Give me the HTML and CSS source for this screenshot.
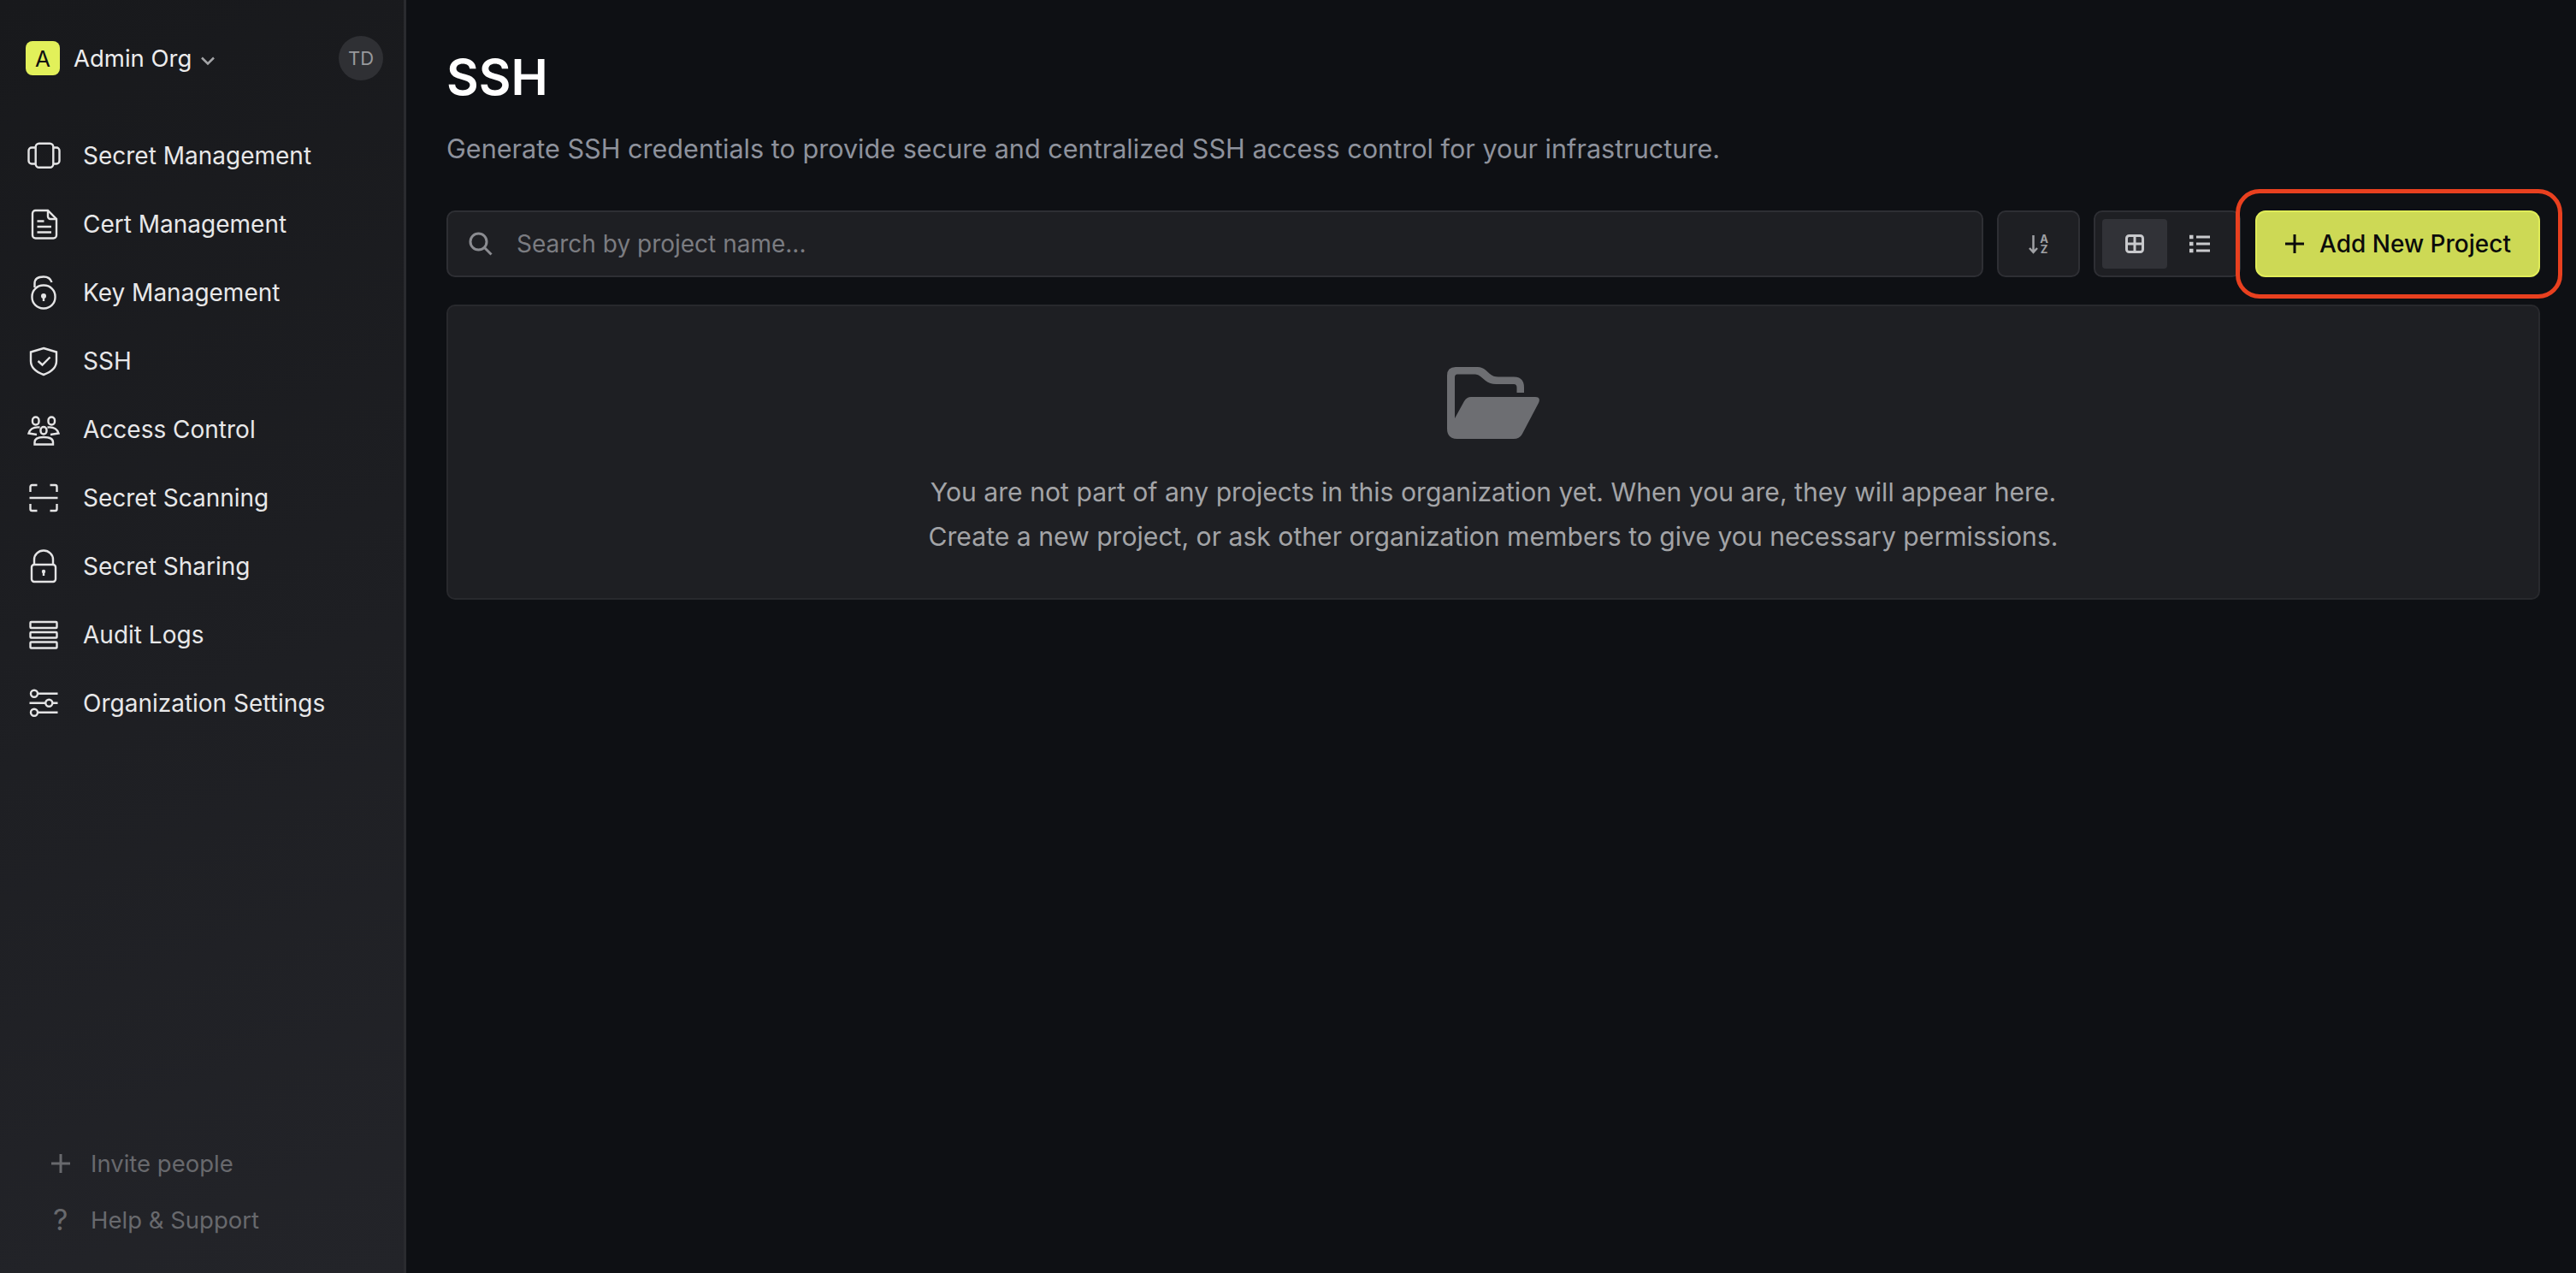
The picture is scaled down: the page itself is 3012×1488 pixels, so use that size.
FILE: index.html
```html
<!DOCTYPE html>
<html lang="en">
<head>
    <meta charset="UTF-8">
    <meta name="viewport" content="width=device-width, initial-scale=1.0">
    <title>SSH</title>
    <link rel="stylesheet" href="styles.css">
</head>
<body>
    <aside class="sidebar">
        <div class="org-row">
            <span class="org-logo">A</span>
            <span class="org-name">Admin Org</span>
            <svg class="org-chevron" viewBox="0 0 18 12"><path d="M2 2.500l7 7 7-7"/></svg>
            <span class="avatar">TD</span>
        </div>
        <nav class="nav">
            <a class="nav-item">
                <svg class="nav-icon" viewBox="0 0 40 40"><rect x="10.7" y="5.7" width="20.6" height="28" rx="4"/><path d="M10.7 10.5H6a3.500 3.500 0 0 0-3.500 3.500v12a3.500 3.500 0 0 0 3.500 3.500h4.700M31.300 10.500H35a3.500 3.500 0 0 1 3.500 3.500v12a3.500 3.500 0 0 1-3.500 3.500h-3.700"/></svg>
                Secret Management
            </a>
            <a class="nav-item">
                <svg class="nav-icon" viewBox="0 0 40 40"><path d="M10.500 4H25L35 14v19a3.500 3.500 0 0 1-3.500 3.500h-21A3.500 3.500 0 0 1 7 33V7.500A3.500 3.500 0 0 1 10.500 4z"/><path d="M25 4v7a3 3 0 0 0 3 3h7M12.500 16.500h8M12.500 23h16.500M12.500 29.500h16.500"/></svg>
                Cert Management
            </a>
            <a class="nav-item">
                <svg class="nav-icon" viewBox="0 0 40 40"><rect x="6.500" y="11.500" width="27" height="27" rx="13"/><path d="M9.500 14V9.500Q9.500 1.500 20 1.500Q27.500 1.500 29.500 8"/><circle class="solid" cx="20" cy="24" r="3"/><path d="M20 25v5"/></svg>
                Key Management
            </a>
            <a class="nav-item nav-item-active">
                <svg class="nav-icon" viewBox="0 0 40 40"><path d="M20 5l15 4.500V20q0 10.500-15 16Q5 30.500 5 20V9.500z"/><path d="M13.500 20l5 4.500 9-9"/></svg>
                SSH
            </a>
            <a class="nav-item">
                <svg class="nav-icon" viewBox="0 0 40 40"><rect x="7" y="5.500" width="7.500" height="9" rx="3.700"/><rect x="25.500" y="5.500" width="7.500" height="9" rx="3.700"/><rect x="16.500" y="17" width="7" height="8.500" rx="3.500"/><path d="M15.500 17.500Q5 16.500 2.500 24.500L12 26M24.500 17.500Q35 16.500 37.500 24.500L28 26"/><path d="M9.500 37.500V35Q9.500 29 20 29Q31 29 31 35v2.500z"/></svg>
                Access Control
            </a>
            <a class="nav-item">
                <svg class="nav-icon" viewBox="0 0 40 40"><path d="M4.500 13V7a2 2 0 0 1 2-2h6M27.500 5h6a2 2 0 0 1 2 2v6M4.500 27v6a2 2 0 0 0 2 2h6M27.500 35h6a2 2 0 0 0 2-2v-6M3.500 20h33"/></svg>
                Secret Scanning
            </a>
            <a class="nav-item">
                <svg class="nav-icon" viewBox="0 0 40 40"><rect x="6" y="18" width="28" height="20" rx="3"/><path d="M9 18v-6a11 10.500 0 0 1 22 0v6"/><circle class="solid" cx="20" cy="26" r="2.200"/><path d="M20 27v4"/></svg>
                Secret Sharing
            </a>
            <a class="nav-item">
                <svg class="nav-icon" viewBox="0 0 40 40"><rect x="4.500" y="5" width="31" height="7" rx="1"/><rect x="4.500" y="17" width="31" height="6.500" rx="1"/><rect x="4.500" y="28.500" width="31" height="7" rx="1"/></svg>
                Audit Logs
            </a>
            <a class="nav-item">
                <svg class="nav-icon" viewBox="0 0 40 40"><circle cx="9" cy="8.700" r="4"/><circle cx="26.300" cy="19.700" r="4"/><circle cx="9" cy="30.700" r="4"/><path d="M13 8.700h23.500M3.500 19.700h19M30.300 19.700h6.200M13 30.700h23.500"/></svg>
                Organization Settings
            </a>
        </nav>
        <div class="side-footer">
            <a class="footer-item">
                <svg class="footer-plus" viewBox="0 0 24 24"><path d="M12 1v22M1 12h22"/></svg>
                Invite people
            </a>
            <a class="footer-item"><span class="footer-icon">?</span>Help &amp; Support</a>
        </div>
    </aside>
    <main class="main">
        <h1 class="page-title">SSH</h1>
        <p class="page-desc">Generate SSH credentials to provide secure and centralized SSH access control for your infrastructure.</p>
        <div class="toolbar">
            <div class="search">
                <svg class="search-icon" viewBox="0 0 28 28"><circle cx="11.500" cy="11.500" r="9.500"/><path d="M18.500 18.500l8 8"/></svg>
                <span class="search-text">Search by project name...</span>
            </div>
            <div class="tool-btn">
                <svg class="sort-icon" viewBox="0 -4 26 30">
                    <path d="M6.500 1v19.500M2 16l4.500 5 4.500-5"/>
                    <text x="19" y="10" class="sort-letter">A</text>
                    <text x="19" y="22" class="sort-letter">Z</text>
                </svg>
            </div>
            <div class="view-toggle">
                <span class="view-btn view-btn-active">
                    <svg class="view-icon" viewBox="0 0 22 22"><rect x="1.500" y="1.500" width="19" height="19" rx="3"/><path d="M11 1.500v19M1.500 11h19"/></svg>
                </span>
                <span class="view-btn">
                    <svg class="view-icon view-icon-list" viewBox="0 0 24 22"><path d="M8 3h16M8 11h16M8 19h16"/><path class="list-dots" d="M0 3h4.500M0 11h4.500M0 19h4.500"/></svg>
                </span>
            </div>
            <div class="add-wrap">
                <button class="add-btn" type="button">
                    <svg class="add-plus" viewBox="0 0 24 24"><path d="M12 1v22M1 12h22"/></svg>
                    Add New Project
                </button>
                <span class="callout"></span>
            </div>
        </div>
        <section class="empty">
            <svg class="empty-icon" viewBox="0 0 108 84"><path d="M10 0H36Q41 0 45 3.500L50 8Q54 11.500 60 11.500H78Q90 11.500 90 24V30H81.500V24Q81.500 20 78 20H57Q50 20 45 16L39 11Q36.500 8.500 33 8.500H12Q9 8.500 9 12V60L20 40Q23 35 28 35H103Q110 35 107 42L88 78Q85 84 78 84H12Q0 84 0 72V10Q0 0 10 0Z"/></svg>
            <p class="empty-text">You are not part of any projects in this organization yet. When you are, they will appear here.<br>Create a new project, or ask other organization members to give you necessary permissions.</p>
        </section>
    </main>
</body>
</html>
```

FILE: styles.css
```css
* {
    box-sizing: border-box;
}
body {
    display: flex;
    height: 1488px;
    margin: 0;
    overflow: hidden;
    background-color: #0e1014;
    font-family: Inter, "Liberation Sans", sans-serif;
    font-size: 28px;
    color: #e8e8e9;
}

/* sidebar */
.sidebar {
    display: flex;
    flex-direction: column;
    flex: none;
    width: 475px;
    background: linear-gradient(160deg, #18191c 0%, #232429 100%);
    border-right: 3px solid #2a2b2f;
}
.org-row {
    display: flex;
    align-items: center;
    height: 136px;
    padding: 0 24px 0 30px;
}
.org-logo {
    display: flex;
    align-items: center;
    justify-content: center;
    width: 40px;
    height: 40px;
    border-radius: 8px;
    background-color: #e2f05a;
    color: #111;
    font-size: 26px;
}
.org-name {
    margin-left: 16px;
    color: #ececed;
    font-size: 27.5px;
}
.org-chevron {
    width: 18px;
    height: 12px;
    margin: 6px 0 0 10px;
    fill: none;
    stroke: #a3a4a7;
    stroke-width: 2.500;
}
.avatar {
    display: flex;
    align-items: center;
    justify-content: center;
    width: 52px;
    height: 52px;
    margin-left: auto;
    border-radius: 50%;
    background-color: #2f3034;
    color: #98999c;
    font-size: 22px;
}
.nav {
    display: flex;
    flex-direction: column;
    margin-top: 6px;
}
.nav-item {
    display: flex;
    align-items: center;
    gap: 26px;
    height: 80px;
    padding-left: 31px;
}
.nav-icon {
    flex: none;
    width: 40px;
    height: 40px;
    fill: none;
    stroke: #e4e4e5;
    stroke-width: 2.400;
}
.nav-icon .solid {
    fill: #e4e4e5;
    stroke: none;
}
.side-footer {
    display: flex;
    flex-direction: column;
    gap: 26px;
    margin-top: auto;
    padding: 0 0 42px 59px;
    font-size: 27.5px;
}
.footer-item {
    display: flex;
    align-items: center;
    height: 40px;
    color: #68696d;
}
.footer-plus {
    flex: none;
    width: 24px;
    height: 24px;
    margin-right: 23px;
    fill: none;
    stroke: #68696d;
    stroke-width: 3;
}
.footer-icon {
    width: 47px;
    padding-left: 3px;
    font-size: 34px;
    line-height: 40px;
}

/* main */
.main {
    flex: 1;
    min-width: 0;
    padding: 54px 42px 0 47px;
}
.page-title {
    margin: 0;
    color: #fff;
    font-size: 58px;
    font-weight: 600;
    line-height: 72px;
}
.page-desc {
    margin: 26px 0 0;
    color: #8e929c;
    font-size: 30.6px;
    line-height: 44px;
}
.toolbar {
    display: flex;
    height: 78px;
    margin-top: 50px;
}
.search {
    display: flex;
    flex: 1;
    align-items: center;
    padding-left: 24px;
    background-color: #1e1f23;
    border: 2px solid #2e2f34;
    border-radius: 10px;
}
.search-icon {
    width: 28px;
    height: 28px;
    fill: none;
    stroke: #8b8c91;
    stroke-width: 3;
}
.search-text {
    margin-left: 28px;
    color: #7b7c81;
}
.tool-btn {
    display: flex;
    align-items: center;
    justify-content: center;
    width: 97px;
    margin-left: 16px;
    background-color: #1e1f23;
    border: 2px solid #2e2f34;
    border-radius: 10px;
}
.sort-icon {
    width: 26px;
    height: 30px;
    fill: none;
    stroke: #a0a1a5;
    stroke-width: 2.500;
}
.sort-letter {
    fill: #a0a1a5;
    stroke: none;
    font-size: 13px;
    font-weight: 700;
    text-anchor: middle;
}
.view-toggle {
    display: flex;
    width: 172px;
    margin-left: 16px;
    padding: 8px;
    background-color: #1e1f23;
    border: 2px solid #2e2f34;
    border-radius: 10px;
}
.view-btn {
    display: flex;
    align-items: center;
    justify-content: center;
    width: 76px;
    border-radius: 4px;
}
.view-btn-active {
    background-color: #313237;
}
.view-icon {
    width: 22px;
    height: 22px;
    fill: none;
    stroke: #c9cacd;
    stroke-width: 3;
}
.view-icon-list {
    width: 24px;
}
.list-dots {
    stroke-width: 4.500;
}
.add-wrap {
    position: relative;
    width: 333px;
    margin-left: 17px;
}
.add-btn {
    display: flex;
    align-items: center;
    justify-content: center;
    gap: 17px;
    width: 100%;
    height: 100%;
    padding: 0;
    background-color: #cdd955;
    border: 2px solid #e0ec58;
    border-radius: 12px;
    color: #0b0b0b;
    font-family: inherit;
    font-size: 28px;
    font-weight: 500;
}
.add-plus {
    width: 24px;
    height: 24px;
    fill: none;
    stroke: #0b0b0b;
    stroke-width: 3;
}
.callout {
    position: absolute;
    top: -25px;
    right: -26px;
    bottom: -25px;
    left: -23px;
    border: 5px solid #e8401f;
    border-radius: 28px;
}
.empty {
    display: flex;
    flex-direction: column;
    align-items: center;
    height: 345px;
    margin-top: 32px;
    padding-top: 71px;
    background-color: #1e1f23;
    border: 2px solid #28292d;
    border-radius: 10px;
}
.empty-icon {
    width: 108px;
    height: 84px;
    fill: #6d6e72;
}
.empty-text {
    margin: 36px 0 0;
    color: #a3a4a7;
    font-size: 30.15px;
    line-height: 52px;
    text-align: center;
}
```
